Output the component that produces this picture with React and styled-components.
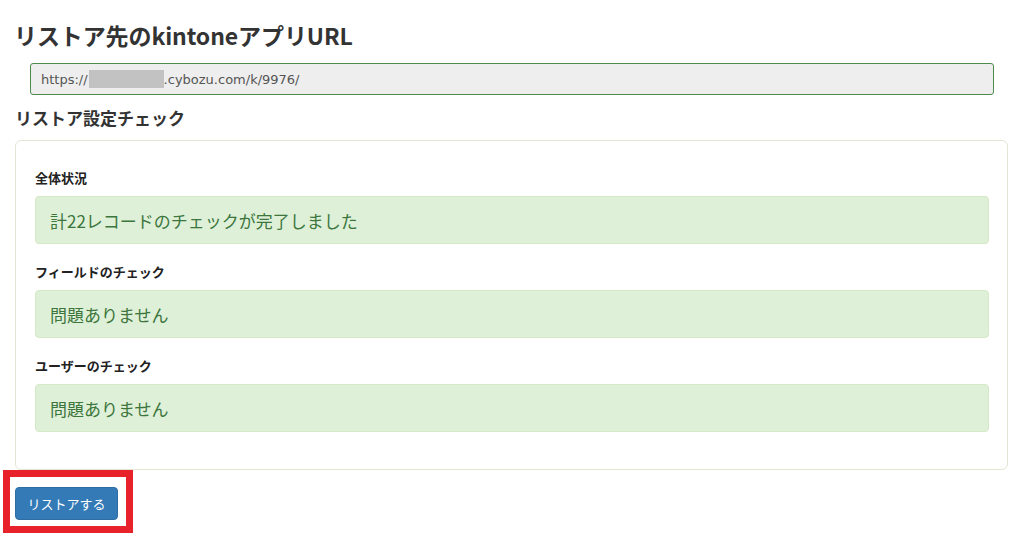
import React from "react";
import styled, { createGlobalStyle } from "styled-components";

const Global = createGlobalStyle`
  html, body { margin: 0; padding: 0; background: #fff; }
  body {
    font-family: "Noto Sans CJK JP", "Noto Sans", "Liberation Sans", sans-serif;
    color: #333;
  }
`;

const Page = styled.div`
  width: 1024px;
  height: 536px;
  box-sizing: border-box;
  padding: 0 16px 0 15px;
  overflow: hidden;
`;

const Title = styled.h2`
  margin: 20px 0 0 -1px;
  font-size: 23px;
  line-height: 30px;
  font-weight: 700;
  color: #333;
  letter-spacing: -0.1px;
`;

const UrlField = styled.div`
  margin: 13px 14px 0 15px;
  height: 32px;
  box-sizing: border-box;
  border: 1px solid #4c8b4c;
  border-radius: 3px;
  background: #eeeeee;
  display: flex;
  align-items: center;
  padding: 0 10px;
  font-family: "DejaVu Sans", Verdana, sans-serif;
  font-size: 13px;
  color: #555;
`;

const Redacted = styled.span`
  display: inline-block;
  width: 75px;
  height: 18px;
  background: #c2c2c2;
  margin: 0 0 0 1px;
`;

const SubTitle = styled.h3`
  margin: 11px 0 0 0;
  font-size: 17px;
  line-height: 24px;
  font-weight: 700;
  color: #333;
`;

const Panel = styled.div`
  margin-top: 10px;
  height: 330px;
  box-sizing: border-box;
  border: 1px solid #e4e6d4;
  border-radius: 6px;
  padding: 28px 18px 0 19px;
`;

const Label = styled.div`
  font-size: 13px;
  line-height: 18px;
  font-weight: 700;
  color: #222;
  margin-top: ${(p) => (p.$first ? "0" : "19px")};
  margin-bottom: 9px;
`;

const Alert = styled.div`
  height: 48px;
  box-sizing: border-box;
  background: #dff0d8;
  border: 1px solid #d6e9c6;
  border-radius: 4px;
  color: #3c763d;
  font-size: 17px;
  display: flex;
  align-items: center;
  padding: 0 14px;
`;

const Highlight = styled.div`
  display: inline-block;
  margin: 0 0 0 -12px;
  border: 7px solid #e8222b;
  padding: 10px 8px 6px 5px;
`;

const Button = styled.button`
  display: block;
  width: 103px;
  height: 33px;
  background: #337ab7;
  border: 1px solid #2e6da4;
  border-radius: 4px;
  color: #fff;
  font-family: "Noto Sans CJK JP", sans-serif;
  font-size: 13px;
  padding: 0;
  cursor: pointer;
`;

const checks = [
  { label: "全体状況", text: "計22レコードのチェックが完了しました" },
  { label: "フィールドのチェック", text: "問題ありません" },
  { label: "ユーザーのチェック", text: "問題ありません" },
];

export default function App() {
  return (
    <>
      <Global />
      <Page>
        <Title>リストア先のkintoneアプリURL</Title>
        <UrlField>
          https://<Redacted />.cybozu.com/k/9976/
        </UrlField>
        <SubTitle>リストア設定チェック</SubTitle>
        <Panel>
          {checks.map((c, i) => (
            <React.Fragment key={i}>
              <Label $first={i === 0}>{c.label}</Label>
              <Alert>{c.text}</Alert>
            </React.Fragment>
          ))}
        </Panel>
        <Highlight>
          <Button>リストアする</Button>
        </Highlight>
      </Page>
    </>
  );
}
